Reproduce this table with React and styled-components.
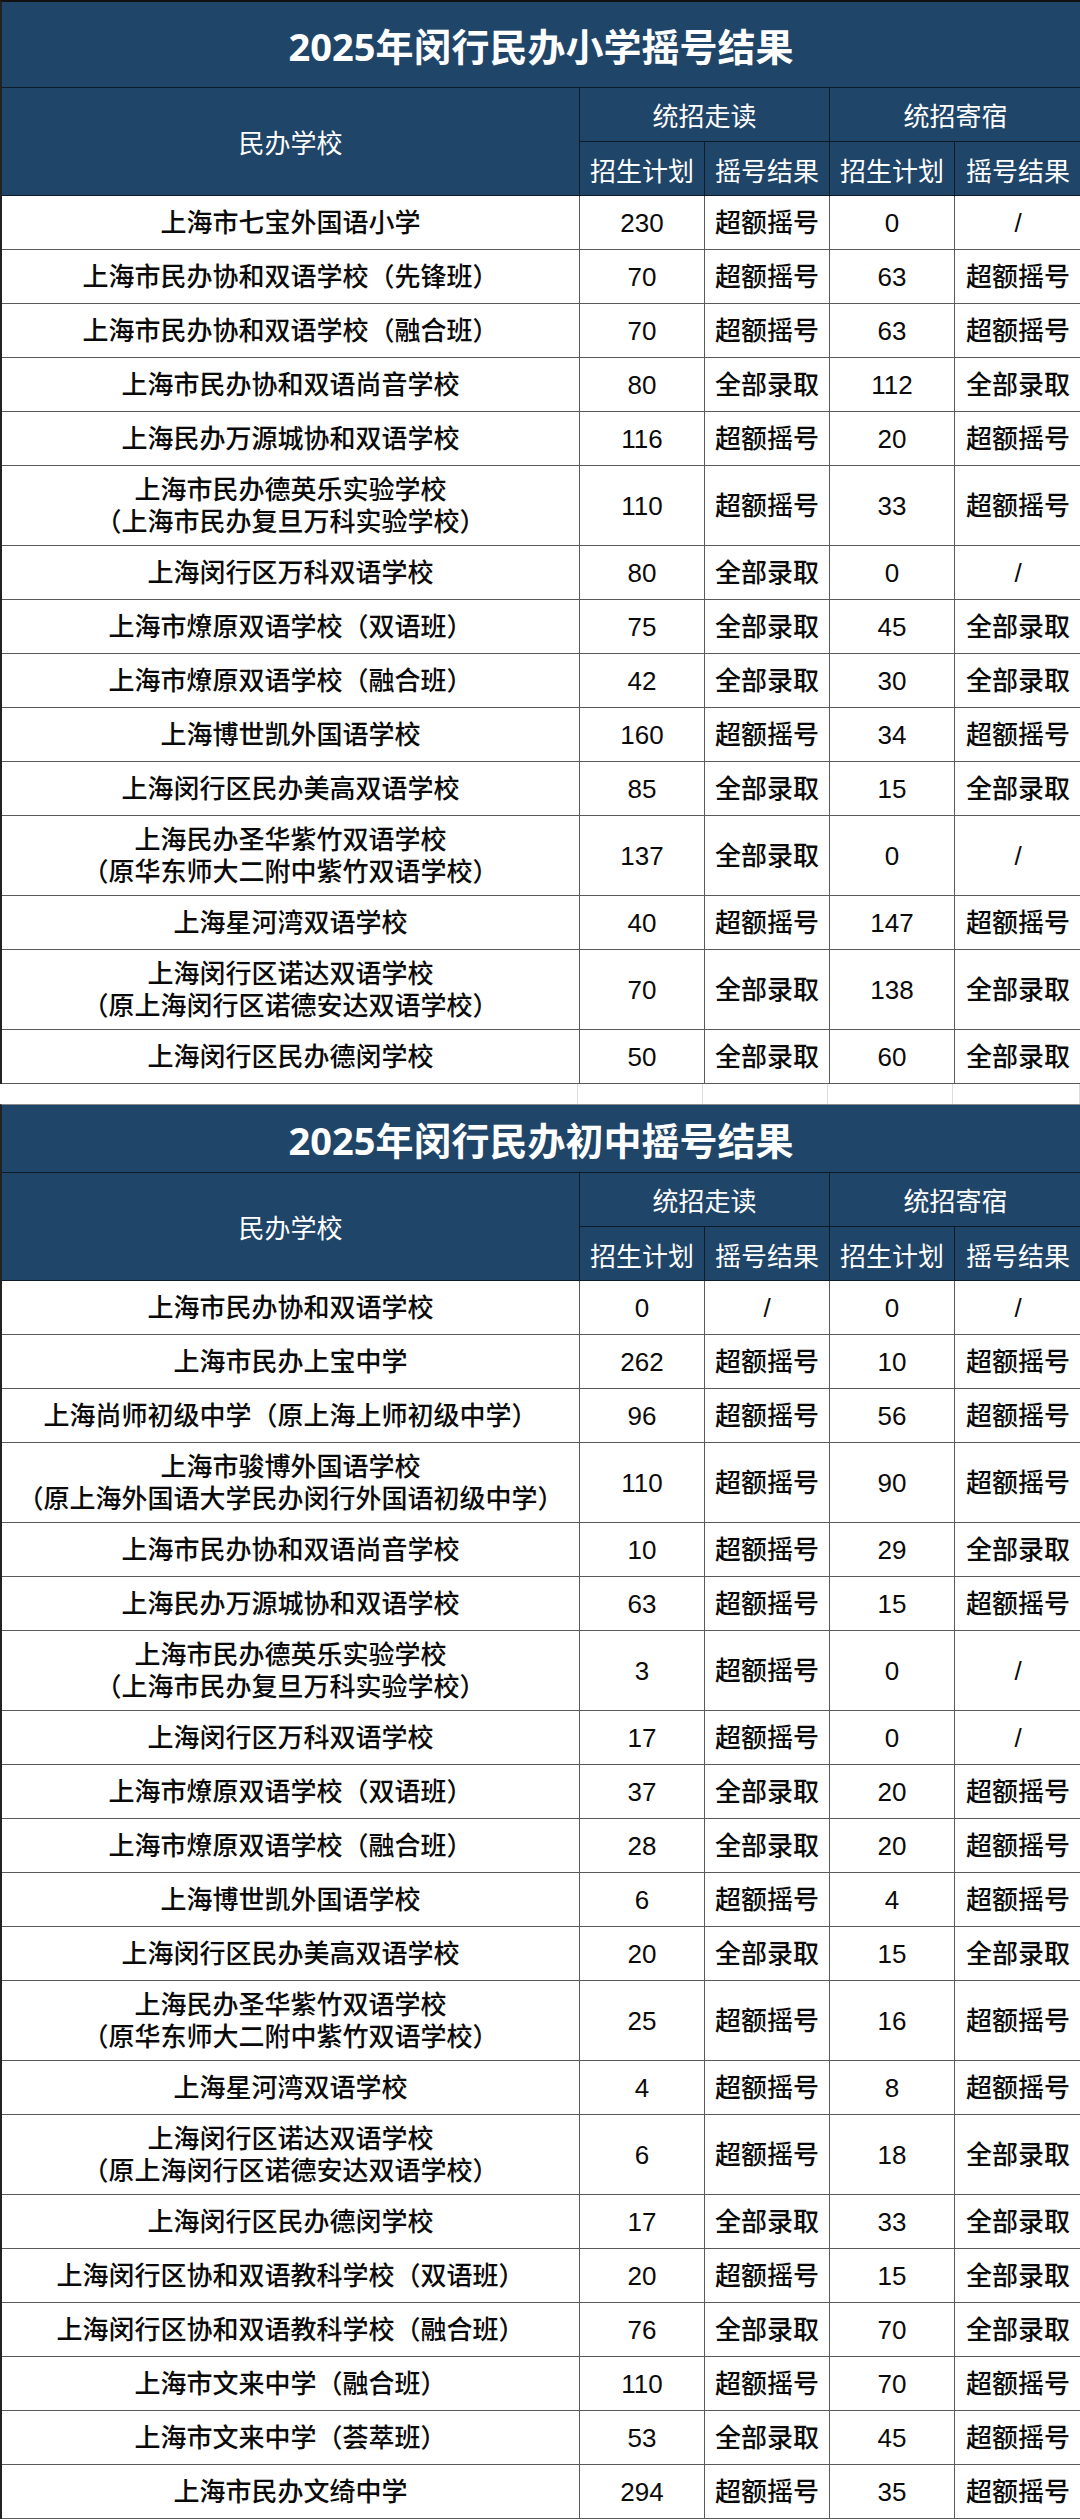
import React from "react";
import styled, { createGlobalStyle } from "styled-components";

const Global = createGlobalStyle`
  html, body { margin: 0; padding: 0; background: #ffffff; }
  * { box-sizing: border-box; }
`;

const NAVY = "#1f4569";
const HEAD_LINE = "#0d1b28";
const DATA_LINE = "#5a5a5a";
const COLS = "578px 125px 125px 125px 127px";

const Page = styled.div`
  width: 1080px;
  display: flex;
  flex-direction: column;
  font-family: "Liberation Sans", "Noto Sans CJK SC", sans-serif;
`;

const Sheet = styled.section`
  display: flex;
  flex-direction: column;
  border-left: 2px solid #222;
  border-top: ${(p) => (p.$first ? "2px solid #111" : "1px solid #8a8a8a")};
`;

const Title = styled.h1`
  margin: 0;
  height: ${(p) => p.$h}px;
  background: ${NAVY};
  color: #ffffff;
  display: flex;
  align-items: center;
  justify-content: center;
  font-family: "Noto Sans", "Noto Sans CJK SC", sans-serif;
  font-weight: 700;
  font-size: 38px;
  letter-spacing: 0;
  border-bottom: 1px solid ${HEAD_LINE};
`;

const HeadGrid = styled.div`
  display: grid;
  grid-template-columns: ${COLS};
  grid-template-rows: 54px 54px;
  background: ${NAVY};
`;

const HeadCell = styled.div`
  grid-column: ${(p) => p.$col || "auto"};
  grid-row: ${(p) => p.$row || "auto"};
  display: flex;
  align-items: center;
  justify-content: center;
  color: #ffffff;
  font-family: "Noto Sans CJK SC", sans-serif;
  font-size: 26px;
  font-weight: 400;
  border-right: 1px solid ${HEAD_LINE};
  border-bottom: 1px solid ${HEAD_LINE};
  padding-top: ${(p) => (p.$low ? "2px" : "0")};
`;

const Row = styled.div`
  display: grid;
  grid-template-columns: ${COLS};
  height: ${(p) => p.$h}px;
  background: #ffffff;
`;

const Cell = styled.div`
  display: flex;
  flex-direction: column;
  align-items: center;
  justify-content: center;
  text-align: center;
  color: #0a0a0a;
  font-size: 26px;
  line-height: 32px;
  font-weight: 500;
  border-right: 1px solid ${DATA_LINE};
  border-bottom: 1px solid ${DATA_LINE};
  white-space: nowrap;
`;

const Line = styled.span`
  display: block;
`;

const Gap = styled.div`
  display: grid;
  grid-template-columns: ${COLS};
  height: 20px;
  background: #ffffff;
`;

const GapCell = styled.div`
  border-right: 1px solid #dcdcdc;
`;

const primary = [
  [["上海市七宝外国语小学"], "230", "超额摇号", "0", "/"],
  [["上海市民办协和双语学校（先锋班）"], "70", "超额摇号", "63", "超额摇号"],
  [["上海市民办协和双语学校（融合班）"], "70", "超额摇号", "63", "超额摇号"],
  [["上海市民办协和双语尚音学校"], "80", "全部录取", "112", "全部录取"],
  [["上海民办万源城协和双语学校"], "116", "超额摇号", "20", "超额摇号"],
  [["上海市民办德英乐实验学校", "（上海市民办复旦万科实验学校）"], "110", "超额摇号", "33", "超额摇号"],
  [["上海闵行区万科双语学校"], "80", "全部录取", "0", "/"],
  [["上海市燎原双语学校（双语班）"], "75", "全部录取", "45", "全部录取"],
  [["上海市燎原双语学校（融合班）"], "42", "全部录取", "30", "全部录取"],
  [["上海博世凯外国语学校"], "160", "超额摇号", "34", "超额摇号"],
  [["上海闵行区民办美高双语学校"], "85", "全部录取", "15", "全部录取"],
  [["上海民办圣华紫竹双语学校", "（原华东师大二附中紫竹双语学校）"], "137", "全部录取", "0", "/"],
  [["上海星河湾双语学校"], "40", "超额摇号", "147", "超额摇号"],
  [["上海闵行区诺达双语学校", "（原上海闵行区诺德安达双语学校）"], "70", "全部录取", "138", "全部录取"],
  [["上海闵行区民办德闵学校"], "50", "全部录取", "60", "全部录取"],
];

const middle = [
  [["上海市民办协和双语学校"], "0", "/", "0", "/"],
  [["上海市民办上宝中学"], "262", "超额摇号", "10", "超额摇号"],
  [["上海尚师初级中学（原上海上师初级中学）"], "96", "超额摇号", "56", "超额摇号"],
  [["上海市骏博外国语学校", "（原上海外国语大学民办闵行外国语初级中学）"], "110", "超额摇号", "90", "超额摇号"],
  [["上海市民办协和双语尚音学校"], "10", "超额摇号", "29", "全部录取"],
  [["上海民办万源城协和双语学校"], "63", "超额摇号", "15", "超额摇号"],
  [["上海市民办德英乐实验学校", "（上海市民办复旦万科实验学校）"], "3", "超额摇号", "0", "/"],
  [["上海闵行区万科双语学校"], "17", "超额摇号", "0", "/"],
  [["上海市燎原双语学校（双语班）"], "37", "全部录取", "20", "超额摇号"],
  [["上海市燎原双语学校（融合班）"], "28", "全部录取", "20", "超额摇号"],
  [["上海博世凯外国语学校"], "6", "超额摇号", "4", "超额摇号"],
  [["上海闵行区民办美高双语学校"], "20", "全部录取", "15", "全部录取"],
  [["上海民办圣华紫竹双语学校", "（原华东师大二附中紫竹双语学校）"], "25", "超额摇号", "16", "超额摇号"],
  [["上海星河湾双语学校"], "4", "超额摇号", "8", "超额摇号"],
  [["上海闵行区诺达双语学校", "（原上海闵行区诺德安达双语学校）"], "6", "超额摇号", "18", "全部录取"],
  [["上海闵行区民办德闵学校"], "17", "全部录取", "33", "全部录取"],
  [["上海闵行区协和双语教科学校（双语班）"], "20", "超额摇号", "15", "全部录取"],
  [["上海闵行区协和双语教科学校（融合班）"], "76", "全部录取", "70", "全部录取"],
  [["上海市文来中学（融合班）"], "110", "超额摇号", "70", "超额摇号"],
  [["上海市文来中学（荟萃班）"], "53", "全部录取", "45", "超额摇号"],
  [["上海市民办文绮中学"], "294", "超额摇号", "35", "超额摇号"],
];

function Table({ title, titleH, rows, first }) {
  return (
    <Sheet $first={first}>
      <Title $h={titleH}>{title}</Title>
      <HeadGrid>
        <HeadCell $col="1" $row="1 / span 2">民办学校</HeadCell>
        <HeadCell $col="2 / span 2" $row="1">统招走读</HeadCell>
        <HeadCell $col="4 / span 2" $row="1">统招寄宿</HeadCell>
        <HeadCell $low>招生计划</HeadCell>
        <HeadCell $low>摇号结果</HeadCell>
        <HeadCell $low>招生计划</HeadCell>
        <HeadCell $low>摇号结果</HeadCell>
      </HeadGrid>
      {rows.map(([name, a, b, c, d], i) => (
        <Row key={i} $h={name.length > 1 ? 80 : 54}>
          <Cell>
            {name.map((l) => (
              <Line key={l}>{l}</Line>
            ))}
          </Cell>
          <Cell>{a}</Cell>
          <Cell>{b}</Cell>
          <Cell>{c}</Cell>
          <Cell>{d}</Cell>
        </Row>
      ))}
    </Sheet>
  );
}

export default function App() {
  return (
    <Page>
      <Global />
      <Table first title="2025年闵行民办小学摇号结果" titleH={86} rows={primary} />
      <Gap>
        <GapCell />
        <GapCell />
        <GapCell />
        <GapCell />
        <GapCell />
      </Gap>
      <Table title="2025年闵行民办初中摇号结果" titleH={68} rows={middle} />
    </Page>
  );
}
